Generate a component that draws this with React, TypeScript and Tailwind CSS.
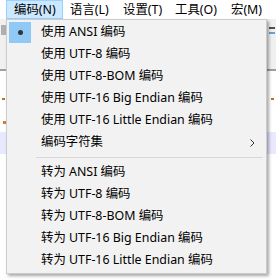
import React from "react";

const font = { fontFamily: '"Noto Sans", "Noto Sans CJK SC", sans-serif' };

type Item = { label: string; checked?: boolean; sub?: boolean } | "sep";

const items: Item[] = [
  { label: "使用 ANSI 编码", checked: true },
  { label: "使用 UTF-8 编码" },
  { label: "使用 UTF-8-BOM 编码" },
  { label: "使用 UTF-16 Big Endian 编码" },
  { label: "使用 UTF-16 Little Endian 编码" },
  { label: "编码字符集", sub: true },
  "sep",
  { label: "转为 ANSI 编码" },
  { label: "转为 UTF-8 编码" },
  { label: "转为 UTF-8-BOM 编码" },
  { label: "转为 UTF-16 Big Endian 编码" },
  { label: "转为 UTF-16 Little Endian 编码" },
];

const menus = [
  { label: "编码(N)", w: "w-[57px]", active: true },
  { label: "语言(L)", w: "w-[53px]" },
  { label: "设置(T)", w: "w-[52px]" },
  { label: "工具(O)", w: "w-[56px]" },
  { label: "宏(M)", w: "w-[46px]" },
];

export default function App() {
  return (
    <div
      className="relative w-[276px] h-[280px] overflow-hidden bg-white text-[12.4px] text-black"
      style={font}
    >
      {/* menu bar */}
      <div className="flex h-[19px] pl-[6px] bg-white">
        {menus.map((m) => (
          <div
            key={m.label}
            className={`${m.w} h-[19px] pl-[7px] pt-[1px] flex items-center leading-none ${
              m.active ? "bg-[#cce8ff] border border-[#99d1ff] pl-[6px]" : ""
            }`}
          >
            {m.label}
          </div>
        ))}
      </div>
      {/* toolbar */}
      <div className="h-[52px] bg-[#f0f0f0] border-b-2 border-[#a0a0a0] flex justify-between px-[1px] pt-[6px]">
        <div className="w-[6px] h-[10px] bg-[#b0b0b0]" />
        <div className="flex flex-col gap-[3px] pt-[2px] w-[6px]">
          <div className="h-[2px] bg-[#505050]" />
          <div className="h-[2px] bg-[#6a9fd8]" />
        </div>
      </div>
      {/* editor */}
      <div className="flex flex-col">
        <div className="h-[27px]" />
        <div className="h-[2px] flex justify-between">
          <div className="w-[3px] bg-[#c07020] ml-[2px]" />
          <div className="w-[3px] bg-[#c07020] mr-[2px]" />
        </div>
        <div className="h-[21px]" />
        <div className="h-[3px] flex">
          <div className="w-[3px] bg-[#d08030] ml-[3px]" />
        </div>
        <div className="h-[8px]" />
        <div className="h-[22px] bg-[#e8e8ff]" />
      </div>

      {/* dropdown */}
      <div className="absolute left-[6px] top-[19px] w-[261px] h-[255px] bg-[#f2f2f2] border border-[#cccccc] shadow-[2px_2px_3px_rgba(0,0,0,0.35)] py-[1px] flex flex-col">
        {items.map((it, i) =>
          it === "sep" ? (
            <div key={i} className="h-[8px] flex items-center pl-[29px] pr-[3px]">
              <div className="h-[1px] w-full bg-[#d7d7d7]" />
            </div>
          ) : (
            <div key={i} className="relative h-[22px] flex items-center pl-[34px] pt-[1px]">
              {it.checked && (
                <div className="absolute left-[2px] top-[1px] w-[22px] h-[21px] bg-[#90c8f6] flex items-center justify-center">
                  <div className="w-[5px] h-[5px] rounded-full bg-[#333]" />
                </div>
              )}
              <span className="leading-none">{it.label}</span>
              {it.sub && (
                <svg
                  className="absolute right-[11px] top-[8px]"
                  width="5"
                  height="8"
                  viewBox="0 0 5 8"
                >
                  <path d="M0.5 0.5 L4 4 L0.5 7.5" fill="none" stroke="#333" strokeWidth="1" />
                </svg>
              )}
            </div>
          )
        )}
      </div>
    </div>
  );
}
